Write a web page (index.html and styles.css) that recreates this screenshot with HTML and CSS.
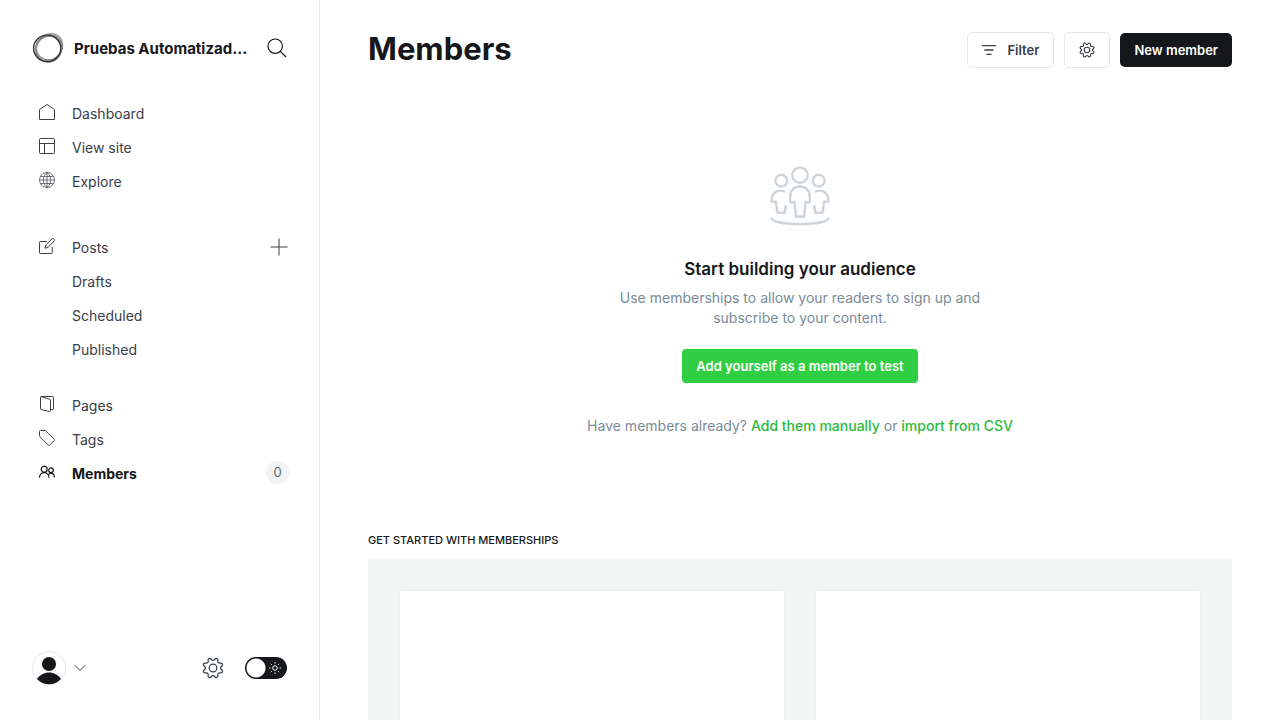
FILE: index.html
```html
<!DOCTYPE html>
<html lang="en">
<head>
<meta charset="utf-8">
<meta name="viewport" content="width=device-width, initial-scale=1">
<title>Members</title>
<link rel="stylesheet" href="styles.css">
</head>
<body>
<svg class="defs" aria-hidden="true">
  <symbol id="gear" viewBox="-1 -1 26 26"><path d="M10.546 2.438a1.957 1.957 0 0 0 2.908 0L14.4 1.4a1.959 1.959 0 0 1 3.41 1.413l-.071 1.4a1.958 1.958 0 0 0 2.051 2.054l1.4-.071a1.959 1.959 0 0 1 1.41 3.41l-1.042.94a1.96 1.96 0 0 0 0 2.909l1.042.94a1.959 1.959 0 0 1-1.413 3.41l-1.4-.071a1.958 1.958 0 0 0-2.056 2.056l.071 1.4A1.959 1.959 0 0 1 14.4 22.6l-.941-1.041a1.959 1.959 0 0 0-2.908 0L9.606 22.6A1.959 1.959 0 0 1 6.2 21.192l.072-1.4a1.958 1.958 0 0 0-2.056-2.056l-1.4.071A1.958 1.958 0 0 1 1.4 14.4l1.041-.94a1.96 1.96 0 0 0 0-2.909L1.4 9.606A1.958 1.958 0 0 1 2.812 6.2l1.4.071a1.958 1.958 0 0 0 2.058-2.06L6.2 2.81A1.959 1.959 0 0 1 9.606 1.4z"/><circle cx="12" cy="12" r="4.5"/></symbol>
</svg>
<div class="app">
  <aside class="sidebar">
    <header class="site">
      <svg class="site-logo" viewBox="0 0 32 32" aria-hidden="true">
        <ellipse cx="17" cy="15.300" rx="14.800" ry="12.400" transform="rotate(-48 17 15.300)" stroke="#aaa" stroke-width="1.500"/>
        <ellipse cx="17.300" cy="15.200" rx="13.200" ry="12.300" transform="rotate(-30 17.300 15.200)" stroke="#777" stroke-width="1"/>
        <ellipse cx="16.800" cy="16.800" rx="13.200" ry="12.400" transform="rotate(-60 16.800 16.800)" stroke="#888" stroke-width="1.800"/>
        <ellipse cx="15.200" cy="16.300" rx="13.600" ry="13.200" stroke="#333" stroke-width="1.400"/>
      </svg>
      <span class="site-name">Pruebas Automatizad...</span>
      <button class="icon-button search" aria-label="Search"><svg class="icon20" viewBox="0 0 20 20"><circle cx="8.2" cy="8.2" r="7.2"/><path d="M13.3 13.3 19 19"/></svg></button>
    </header>
    <nav class="nav">
      <ul class="nav-group">
        <li class="nav-row"><a class="nav-link" href="#"><svg class="nav-icon" viewBox="0 0 16 16"><path d="M.5 5.500 8 .4l7.500 5.100v10H.5z"/></svg>Dashboard</a></li>
        <li class="nav-row"><a class="nav-link" href="#"><svg class="nav-icon" viewBox="0 0 16 16"><rect x=".5" y=".5" width="15" height="15" rx="1"/><path d="M.5 5.500h15M5.500 5.500v10"/></svg>View site</a></li>
        <li class="nav-row"><a class="nav-link" href="#"><svg class="nav-icon thin" viewBox="0 0 16 16"><circle cx="8" cy="8" r="7.500"/><path d="M8 .5v15M.5 8h15M1.600 4.500h12.800M1.600 11.500h12.800M8 .5c-5 4.400-5 10.600 0 15M8 .5c5 4.400 5 10.600 0 15"/></svg>Explore</a></li>
      </ul>
      <ul class="nav-group posts">
        <li class="nav-row"><a class="nav-link" href="#"><svg class="nav-icon" viewBox="0 0 16 16"><path d="M8 3.500H1.200a.7.7 0 0 0-.7.7v10.600c0 .4.3.7.7.7h11.300c.4 0 .7-.3.700-.7V9M6 10.200l.8-3.200L13 .9c.6-.6 1.400-.5 2 .1s.6 1.400.1 2L9.200 9.400z"/></svg>Posts</a><button class="icon-button plus" aria-label="New post"><svg class="plus-icon" viewBox="0 0 18 18"><path d="M9 .5v17M.5 9h17"/></svg></button></li>
        <li class="nav-row"><a class="nav-link sub" href="#">Drafts</a></li>
        <li class="nav-row"><a class="nav-link sub" href="#">Scheduled</a></li>
        <li class="nav-row"><a class="nav-link sub" href="#">Published</a></li>
      </ul>
      <ul class="nav-group">
        <li class="nav-row"><a class="nav-link" href="#"><svg class="nav-icon" viewBox="0 0 16 16"><path d="M11.500 13.500h2.300c.4 0 .7-.3.700-.7V1.200c0-.4-.3-.7-.7-.7H2.200c-.4 0-.7.300-.7.700v11.700c0 .3.200.6.500.7l8.600 1.900c.5.100.9-.2.900-.7V4.100c0-.4-.2-.7-.6-.8L2 .6"/></svg>Pages</a></li>
        <li class="nav-row"><a class="nav-link" href="#"><svg class="nav-icon" viewBox="0 0 16 16"><path d="M.5 1.500v4.300c0 .3.100.6.300.8l8.500 8.600c.4.400.9.400 1.300 0l4.700-4.700c.3-.3.3-.8 0-1.200L6.700.8A1 1 0 0 0 6 .5H1.500a1 1 0 0 0-1 1z"/></svg>Tags</a></li>
        <li class="nav-row"><a class="nav-link active" href="#" aria-current="page"><svg class="nav-icon bold" viewBox="0 0 16 16"><circle cx="5.200" cy="5.300" r="3"/><circle cx="12" cy="6.200" r="2.300"/><path d="M.5 13.800c0-7 9.400-7 9.400 0M9.600 10.300c2.100-2.500 5.900-1.100 5.900 3.300"/></svg>Members</a><span class="count">0</span></li>
      </ul>
    </nav>
    <footer class="account">
      <button class="user" aria-label="Account menu">
        <svg class="avatar" viewBox="0 0 34 34"><circle cx="17" cy="17" r="16.500" fill="#fff" stroke="#e5e8eb"/><circle cx="17" cy="13" r="7" fill="#15171a"/><path d="M5 28C10.500 19.300 23.500 19.300 29 28 22.500 35 11.500 35 5 28z" fill="#15171a"/></svg>
        <svg class="chevron" viewBox="0 0 12 8"><path d="m.5 1 5.500 5.500L11.500 1"/></svg>
      </button>
      <button class="icon-button settings" aria-label="Settings"><svg class="gear-large"><use href="#gear"/></svg></button>
      <label class="switch"><input class="switch-input" type="checkbox" aria-label="Dark mode"><svg class="sun" viewBox="0 0 12 12"><circle cx="6" cy="6" r="2.300"/><path d="M6 0v1.500M6 10.500V12M0 6h1.500M10.500 6H12M1.800 1.800l1 1M9.200 9.200l1 1M1.800 10.200l1-1M9.200 2.800l1-1"/></svg></label>
    </footer>
  </aside>
  <main class="main">
    <header class="page-header">
      <h1 class="title">Members</h1>
      <div class="actions">
        <button class="button"><svg class="filter-icon" viewBox="0 0 14 10"><path d="M0 .7h14M2.500 5h9M4.500 9.300h5"/></svg>Filter</button>
        <button class="button" aria-label="Member actions"><svg class="gear-small"><use href="#gear"/></svg></button>
        <button class="button primary">New member</button>
      </div>
    </header>
    <section class="empty">
      <svg class="people" viewBox="0 0 60 60" aria-hidden="true">
        <circle cx="30" cy="9.200" r="7.700"/><circle cx="11.300" cy="14.700" r="5.900"/><circle cx="48.700" cy="14.700" r="5.900"/>
        <path d="M30 20.500c-6 0-9.800 4.200-9.800 10v5.700h4.200l1.700 14.600h7.800l1.700-14.600h4.200v-5.700c0-5.800-3.800-10-9.800-10z"/>
        <path d="M14.200 25.500C6.500 22.500 1.500 27.800 1.500 35.700h4.400l1.500 11h7.200l1-6.500M45.800 25.500c7.700-3 12.700 2.300 12.700 10.200h-4.400l-1.500 11h-7.200l-1-6.500"/>
        <path d="M1.500 52.500c4 7.500 53 7.500 57 0"/>
      </svg>
      <h2 class="empty-title">Start building your audience</h2>
      <p class="empty-text">Use memberships to allow your readers to sign up and subscribe to your content.</p>
      <button class="button green">Add yourself as a member to test</button>
      <p class="already">Have members already? <a class="green-link" href="#">Add them manually</a> or <a class="green-link" href="#">import from CSV</a></p>
    </section>
    <section class="guides">
      <h3 class="guides-title">Get started with memberships</h3>
      <div class="guide-grid"><article class="card"></article><article class="card"></article></div>
    </section>
  </main>
</div>
</body>
</html>
```
FILE: styles.css
```css
* { box-sizing: border-box; }
body { margin: 0; background: #fff; color: #15171a; font: 14px/20px Inter, "Liberation Sans", sans-serif; }
button { font: inherit; cursor: pointer; }
a { text-decoration: none; }
h1, h2, h3, p, ul { margin: 0; padding: 0; }
svg { display: block; flex: none; fill: none; stroke: currentColor; }
.defs { position: absolute; width: 0; height: 0; }

.app { display: flex; height: 100vh; }
.sidebar { flex: none; width: 320px; display: flex; flex-direction: column; border-right: 1px solid #e5e8eb; }
.site { display: flex; align-items: center; padding: 32px 32px 0; height: 64px; }
.site-logo { width: 32px; height: 32px; }
.site-name { flex: 1; margin-left: 10px; font-size: 15px; line-height: 22px; padding-top: 2px; font-weight: 700; white-space: nowrap; }
.icon-button { display: flex; padding: 0; border: 0; background: none; color: #394047; }
.search { color: #15171a; }
.icon20 { width: 20px; height: 20px; stroke-width: 1.2; }

.nav { flex: 1; padding: 33px 31px 0 39px; }
.nav-group { list-style: none; margin-bottom: 22px; }
.nav-group:first-child { margin-bottom: 32px; }
.nav-row { display: flex; align-items: center; height: 34px; }
.nav-link { flex: 1; display: flex; align-items: center; gap: 17px; color: #394047; font-size: 14px; }
.nav-icon { width: 16px; height: 16px; margin-bottom: 4px; }
.nav-icon.thin { stroke-width: .7; }
.nav-icon.bold { stroke-width: 1.2; }
.nav-link.sub { padding-left: 33px; }
.nav-link.active { color: #15171a; font-weight: 700; }
.plus-icon { width: 18px; height: 18px; margin-bottom: 2px; }
.count { min-width: 23px; margin: 0 -1px 3px 0; border-radius: 12px; background: #f1f3f4; color: #626d79; font-size: 13px; line-height: 23px; text-align: center; }

.account { display: flex; align-items: center; padding: 0 32px 35px; }
.user { display: flex; align-items: center; gap: 8px; padding: 0; margin-right: auto; border: 0; background: none; color: #394047; }
.avatar { width: 34px; height: 34px; stroke: none; }
.chevron { width: 12px; height: 8px; }
.settings { margin-right: 21px; }
.gear-large { width: 22px; height: 22px; stroke-width: 1.5; }
.switch { position: relative; }
.switch-input { display: block; appearance: none; width: 42px; height: 22px; margin: 0; border-radius: 11px; background: radial-gradient(circle at 11px 11px, #fff 9px, #15171a 10px); cursor: pointer; }
.sun { position: absolute; top: 5px; right: 6px; width: 12px; height: 12px; color: #fff; pointer-events: none; }

.main { flex: 1; min-width: 0; padding: 0 48px; overflow: auto; scrollbar-width: none; }
.page-header { display: flex; justify-content: space-between; align-items: center; padding-top: 28px; }
.title { font-size: 31px; line-height: 42px; font-weight: 700; }
.actions { display: flex; align-items: center; gap: 10px; padding-top: 2px; }
.button { display: flex; align-items: center; justify-content: center; gap: 11px; height: 36px; padding: 0 14px; border: 1px solid #e5e8eb; border-radius: 5px; background: #fff; color: #394047; font-size: 13px; font-weight: 600; white-space: nowrap; }
.filter-icon { width: 14px; height: 10px; stroke-width: 1.3; }
.gear-small { width: 16px; height: 16px; overflow: visible; stroke-width: 1.8; }
.button.primary { height: 34px; border: 0; background: #15171a; color: #fff; }
.empty { display: flex; flex-direction: column; align-items: center; padding-top: 96px; text-align: center; }
.people { width: 60px; height: 60px; color: #ced4d9; stroke-width: 2.4; stroke-linecap: round; stroke-linejoin: round; }
.empty-title { margin-top: 31px; font-size: 17px; line-height: 24px; font-weight: 600; }
.empty-text { max-width: 400px; margin-top: 7px; color: #7c8b9a; }
.button.green { height: 34px; margin-top: 21px; border: 0; border-radius: 4px; background: #30cf43; color: #fff; }
.already { margin-top: 33px; color: #7c8b9a; }
.green-link { color: #2bba3c; font-weight: 500; }
.guides { padding: 94px 0 48px; }
.guides-title { font-size: 11px; line-height: 20px; font-weight: 500; text-transform: uppercase; }
.guide-grid { display: grid; grid-template-columns: 1fr 1fr; gap: 32px; margin-top: 9px; padding: 32px; border-radius: 3px; background: #f4f6f6; }
.card { min-height: 320px; border-radius: 3px; background: #fff; box-shadow: 0 1px 4px rgba(0, 0, 0, .08); }
```
